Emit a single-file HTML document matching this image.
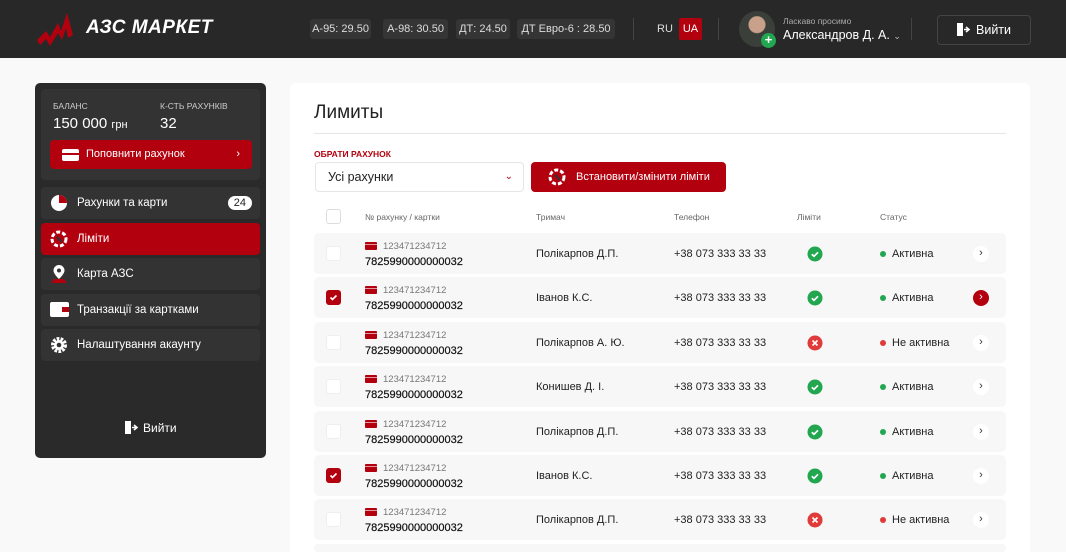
<!DOCTYPE html>
<html style="width:1066px;height:552px;overflow:hidden"><head><meta charset="utf-8"><style>
*{box-sizing:border-box;margin:0;padding:0}
body{width:1066px;height:552px;overflow:hidden;background:#f9f9f9;font-family:"Liberation Sans",Arial,sans-serif;position:relative;color:#222}
.a{position:absolute}
.hdr{left:0;top:0;width:1066px;height:58px;background:#282828}
.chip{top:19px;height:20px;background:#353535;border-radius:3px;color:#ddd;font-size:11px;line-height:20px;text-align:center}
.vd{top:18px;width:1px;height:22px;background:#444}
.side{left:35px;top:83px;width:231px;height:375px;background:#2a2a2a;border-radius:5px}
.bal{left:41px;top:89px;width:219px;height:91px;background:#333;border-radius:4px}
.mi{left:41px;width:219px;height:32px;background:#333;border-radius:4px;color:#fff;font-size:11.5px;line-height:32px;padding-left:36px}
.main{left:290px;top:83px;width:740px;height:469px;background:#fff;border-radius:6px 6px 0 0}
.row{left:314px;width:692px;height:41px;background:#f7f7f7;border-radius:5px;overflow:hidden}
.cb{left:12px;top:13px;width:15px;height:15px;background:#fff;border-radius:3px;border:1px solid #eee}
.cb.on{background:#b3000f;border-color:#b3000f}
.t{font-size:11px;color:#222}
</style></head><body>
<div class="a hdr"></div>
<svg class="a" style="left:35px;top:11px" width="42" height="36" viewBox="0 0 40 36"><path d="M1 29 L10 20 L14 26 L22 12 L25 20 L31 2 L37 24 L32 27 L30 17 L26 29 L22 22 L14 35 L10 28 L4 34 Z" fill="#b3000f"/></svg>
<div class="a" style="left:86px;top:17px;color:#fff;font-size:19px;font-weight:bold;font-style:italic;letter-spacing:.5px">АЗС МАРКЕТ</div>
<div class="a chip" style="left:310px;width:61px">А-95: 29.50</div>
<div class="a chip" style="left:383px;width:65px">А-98: 30.50</div>
<div class="a chip" style="left:456px;width:54px">ДТ: 24.50</div>
<div class="a chip" style="left:517px;width:98px">ДТ Евро-6 : 28.50</div>
<div class="a vd" style="left:633px"></div>
<div class="a" style="left:657px;top:23px;color:#ddd;font-size:11px">RU</div>
<div class="a" style="left:679px;top:18px;width:23px;height:22px;background:#b3000f;border-radius:2px;color:#fff;font-size:11px;line-height:22px;text-align:center">UA</div>
<div class="a vd" style="left:718px"></div>
<div class="a" style="left:739px;top:11px;width:36px;height:36px;border-radius:50%;background:radial-gradient(circle at 50% 38%,#c9a08a 0 8px,#3a3f3a 9px)"></div>
<div class="a" style="left:761px;top:33px;width:15px;height:15px;border-radius:50%;background:#22a650;color:#fff;font-size:13px;line-height:14px;text-align:center;font-weight:bold">+</div>
<div class="a" style="left:783px;top:16px;color:#aaa;font-size:8.5px">Ласкаво просимо</div>
<div class="a" style="left:783px;top:28px;color:#fff;font-size:12.5px">Александров Д. А. <span style="font-size:9px;color:#bbb">&#8964;</span></div>
<div class="a vd" style="left:911px"></div>
<div class="a" style="left:937px;top:15px;width:94px;height:30px;border:1px solid #444;border-radius:4px;color:#fff;font-size:12.5px;line-height:28px;padding-left:38px">Вийти</div>
<svg class="a" style="left:957px;top:23px" width="14" height="13"><rect x="0" y="0" width="6" height="13" fill="#fff"/><path d="M7 6.5h4M9 4l3 2.5-3 2.5" stroke="#fff" stroke-width="1.6" fill="none"/></svg>

<div class="a side"></div>
<div class="a bal"></div>
<div class="a" style="left:53px;top:101px;color:#ccc;font-size:8.5px">БАЛАНС</div>
<div class="a" style="left:160px;top:101px;color:#ccc;font-size:8.5px">К-СТЬ РАХУНКІВ</div>
<div class="a" style="left:53px;top:115px;color:#fff;font-size:15px">150 000 <span style="font-size:11px">грн</span></div>
<div class="a" style="left:160px;top:115px;color:#fff;font-size:15px">32</div>
<div class="a" style="left:50px;top:140px;width:202px;height:29px;background:#b3000f;border-radius:4px;color:#fff;font-size:11px;line-height:29px;padding-left:36px">Поповнити рахунок<span style="position:absolute;right:12px">›</span></div>
<div class="a" style="left:62px;top:149px;width:17px;height:12px;background:#fff;border-radius:2px;border-top:3px solid #fff"><div style="margin-top:1px;height:2px;background:#b3000f"></div></div>

<div class="a mi" style="top:187px">Рахунки та карти<span style="position:absolute;right:8px;top:9px;height:14px;line-height:14px;background:#fff;color:#222;border-radius:7px;padding:0 6px;font-size:11px">24</span></div>
<svg class="a" style="left:50px;top:194px" width="18" height="18"><circle cx="9" cy="9" r="8" fill="#fff"/><path d="M9 9V1A8 8 0 0 1 17 9Z" fill="#b3000f"/></svg>
<div class="a mi" style="top:223px;background:#b3000f">Ліміти</div>
<svg class="a" style="left:50px;top:230px" width="18" height="18"><circle cx="9" cy="9" r="7" stroke="#fff" stroke-width="3" fill="none" stroke-dasharray="4 2"/><path d="M7 7l5 5" stroke="#333" stroke-width="2"/></svg>
<div class="a mi" style="top:258px">Карта АЗС</div>
<svg class="a" style="left:51px;top:264px" width="16" height="20"><path d="M8 1a5.5 5.5 0 0 1 5.5 5.5C13.5 10 8 15 8 15S2.5 10 2.5 6.5A5.5 5.5 0 0 1 8 1z" fill="#fff"/><circle cx="8" cy="6.5" r="2" fill="#333"/><path d="M0 19l3-4h10l3 4z" fill="#b3000f"/></svg>
<div class="a mi" style="top:294px">Транзакції за картками</div>
<svg class="a" style="left:50px;top:302px" width="19" height="15"><rect width="19" height="15" rx="2" fill="#fff"/><rect x="12" y="5" width="7" height="5" fill="#b3000f"/></svg>
<div class="a mi" style="top:329px">Налаштування акаунту</div>
<svg class="a" style="left:50px;top:336px" width="18" height="18" viewBox="0 0 18 18"><circle cx="9" cy="9" r="6" fill="none" stroke="#fff" stroke-width="4" stroke-dasharray="2.5 1.2"/><circle cx="9" cy="9" r="5" fill="#fff"/><circle cx="9" cy="9" r="2.3" fill="#333"/></svg>
<svg class="a" style="left:125px;top:421px" width="14" height="13"><rect width="6" height="13" fill="#fff"/><path d="M7 6.5h4M9 4l3 2.5-3 2.5" stroke="#fff" stroke-width="1.6" fill="none"/></svg>
<div class="a" style="left:143px;top:421px;color:#fff;font-size:12px">Вийти</div>

<div class="a main"></div>
<div class="a" style="left:314px;top:102px;font-size:19px;color:#222">Лимиты</div>
<div class="a" style="left:314px;top:133px;width:692px;height:1px;background:#e6e6e6"></div>
<div class="a" style="left:314px;top:149px;color:#b3000f;font-size:8.5px;font-weight:bold">ОБРАТИ РАХУНОК</div>
<div class="a" style="left:315px;top:162px;width:209px;height:30px;border:1px solid #e6e6e6;border-radius:4px;font-size:12.5px;line-height:28px;padding-left:12px">Усі рахунки<span style="position:absolute;right:10px;color:#b3000f;font-size:10px">&#8964;</span></div>
<div class="a" style="left:531px;top:162px;width:195px;height:30px;background:#b3000f;border-radius:4px;color:#fff;font-size:11px;line-height:30px;padding-left:45px">Встановити/змінити ліміти</div>
<svg class="a" style="left:548px;top:168px" width="18" height="18"><circle cx="9" cy="9" r="7" stroke="#fff" stroke-width="3" fill="none" stroke-dasharray="4 2"/><path d="M7 7l5 5" stroke="#333" stroke-width="2"/></svg>
<div class="a" style="left:326px;top:209px;width:15px;height:15px;border:1px solid #ddd;border-radius:3px"></div>
<div class="a" style="left:365px;top:212px;font-size:8.5px;color:#666">№ рахунку / картки</div>
<div class="a" style="left:536px;top:212px;font-size:8.5px;color:#666">Тримач</div>
<div class="a" style="left:674px;top:212px;font-size:8.5px;color:#666">Телефон</div>
<div class="a" style="left:797px;top:212px;font-size:8.5px;color:#666">Ліміти</div>
<div class="a" style="left:880px;top:212px;font-size:8.5px;color:#666">Статус</div>

<div id="rows"></div>
<script>
var d=[["Полікарпов Д.П.",1,0,0],["Іванов К.С.",1,1,1],["Полікарпов А. Ю.",0,0,0],["Конишев Д. І.",1,0,0],["Полікарпов Д.П.",1,0,0],["Іванов К.С.",1,1,0],["Полікарпов Д.П.",0,0,0],["",1,0,0]];
var h="";
d.forEach(function(r,i){var y=Math.round(233+i*44.4);
var lim=r[1]?'<svg class="a" style="left:493px;top:13px" width="16" height="16"><circle cx="8" cy="8" r="7.5" fill="#22a650"/><path d="M4.8 8.2l2.2 2.1 4-4" stroke="#fff" stroke-width="1.7" fill="none"/></svg>':'<svg class="a" style="left:493px;top:13px" width="16" height="16"><circle cx="8" cy="8" r="7.5" fill="#e03a3a"/><path d="M5.5 5.5l5 5M10.5 5.5l-5 5" stroke="#fff" stroke-width="1.6"/></svg>';
h+='<div class="a row" style="top:'+y+'px;'+(i==7?'height:8px':'')+'">'+(i<7?
'<div class="a cb'+(r[2]?' on':'')+'">'+(r[2]?'<svg width="13" height="13" style="display:block"><path d="M3.5 6.5l2 2 4-4" stroke="#fff" stroke-width="1.6" fill="none"/></svg>':'')+'</div>'+
'<div class="a" style="left:51px;top:9px;width:12px;height:8px;background:#b3000f;border-radius:1px"><div style="margin-top:2px;height:1px;background:#fff;opacity:.6"></div></div>'+
'<div class="a" style="left:69px;top:8px;font-size:9.5px;color:#777">123471234712</div>'+
'<div class="a t" style="left:51px;top:23px;font-size:11px;color:#111;-webkit-text-stroke:.2px #111">7825990000000032</div>'+
'<div class="a t" style="left:222px;top:15px">'+r[0]+'</div>'+
'<div class="a t" style="left:360px;top:15px">+38 073 333 33 33</div>'+lim+
'<div class="a" style="left:566px;top:18px;width:6px;height:6px;border-radius:50%;background:'+(r[1]?'#22a650':'#e03a3a')+'"></div>'+
'<div class="a t" style="left:578px;top:15px">'+(r[1]?'Активна':'Не активна')+'</div>'+
'<div class="a" style="left:659px;top:13px;width:16px;height:16px;border-radius:50%;background:'+(r[3]?'#b3000f':'#fff')+';color:'+(r[3]?'#fff':'#333')+';font-size:11px;line-height:15px;text-align:center">›</div>':'')+'</div>';});
document.getElementById("rows").innerHTML=h;
</script>
</body></html>
